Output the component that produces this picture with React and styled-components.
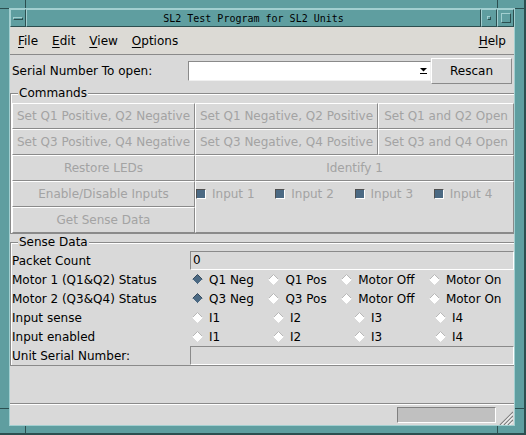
import React from 'react';
import styled, { createGlobalStyle } from 'styled-components';

const TEAL = '#5f9ea0';
const TEAL_LIGHT = '#a2cfd0';
const TEAL_DARK = '#2c4f50';
const BG = '#d9d9d9';
const SHADOW = '#8a8a8a';

const GlobalStyle = createGlobalStyle`
  html, body {
    margin: 0;
    padding: 0;
    background: ${TEAL};
  }
  body {
    font-family: "DejaVu Sans", "Liberation Sans", sans-serif;
    font-size: 12px;
    color: #000;
  }
`;

const Frame = styled.div`
  position: relative;
  width: 526px;
  height: 435px;
  box-sizing: border-box;
  padding: 8px 9px 7px 9px;
  background: ${TEAL};
  border-right: 2px solid ${TEAL_DARK};
  border-bottom: 2px solid ${TEAL_DARK};
`;

// resize handle marks of the window manager frame
const Mark = styled.span`
  position: absolute;
  left: ${p => p.$x}px;
  top: ${p => p.$y}px;
  width: ${p => p.$w}px;
  height: ${p => p.$h}px;
  background: ${TEAL_DARK};
`;

const Window = styled.div`
  height: 100%;
  box-sizing: border-box;
  border: 1px solid ${TEAL_LIGHT};
  display: flex;
  flex-direction: column;
`;

const TitleBar = styled.div`
  display: flex;
  height: 18px;
  flex: none;
`;

const TitlePart = styled.div`
  box-sizing: border-box;
  height: 100%;
  width: ${p => (p.$w ? `${p.$w}px` : 'auto')};
  flex: ${p => (p.$w ? 'none' : '1')};
  border-style: solid;
  border-width: 1px;
  border-color: ${TEAL_LIGHT} ${TEAL_DARK} ${TEAL_DARK} ${TEAL_LIGHT};
  display: flex;
  align-items: center;
  justify-content: center;
`;

const TitleText = styled.span`
  font-family: "DejaVu Sans Mono", "Liberation Mono", monospace;
  font-size: 10px;
  color: #000;
  white-space: nowrap;
`;

const Glyph = styled.span`
  display: block;
  box-sizing: border-box;
  width: ${p => p.$w}px;
  height: ${p => p.$h}px;
  border-style: solid;
  border-width: 1px;
  border-color: ${TEAL_LIGHT} ${TEAL_DARK} ${TEAL_DARK} ${TEAL_LIGHT};
`;

const Client = styled.div`
  flex: 1;
  display: flex;
  flex-direction: column;
  background: ${BG};
  min-height: 0;
`;

const MenuBar = styled.div`
  display: flex;
  align-items: center;
  gap: 14px;
  height: 27px;
  flex: none;
  padding: 0 8px;
  background: #dcdad5;
  border-bottom: 1px solid ${SHADOW};
`;

const MenuItem = styled.span`
  margin-left: ${p => (p.$right ? 'auto' : '0')};
  white-space: nowrap;
  u {
    text-underline-offset: 2px;
  }
`;

const SerialRow = styled.div`
  display: flex;
  align-items: center;
  height: 31px;
  flex: none;
  padding: 0 2px;
`;

const FieldLabel = styled.span`
  width: ${p => p.$w}px;
  flex: none;
  white-space: nowrap;
`;

const Combo = styled.div`
  flex: 1;
  height: 20px;
  box-sizing: border-box;
  background: #fff;
  border: 1px solid;
  border-color: ${SHADOW} #f0f0f0 #f0f0f0 ${SHADOW};
  display: flex;
  align-items: center;
  justify-content: flex-end;
  padding-right: 3px;
`;

const PushButton = styled.button`
  box-sizing: border-box;
  width: ${p => (p.$w ? `${p.$w}px` : 'auto')};
  height: ${p => (p.$h ? `${p.$h}px` : 'auto')};
  grid-column: ${p => (p.$span ? `span ${p.$span}` : 'auto')};
  margin: 0;
  padding: 0;
  border: 1px solid;
  border-color: #fff ${SHADOW} ${SHADOW} #fff;
  border-radius: 0;
  background: ${BG};
  color: ${p => (p.disabled ? '#a3a3a3' : '#000')};
  font-family: "DejaVu Sans", "Liberation Sans", sans-serif;
  font-size: 12px;
  white-space: nowrap;
  overflow: hidden;
`;

const Group = styled.fieldset`
  margin: ${p => p.$mt || 0}px 0 0 0;
  padding: ${p => p.$pt}px 0 0 1px;
  min-width: 0;
  flex: none;
  border: 1px solid ${SHADOW};
  border-right: none;
  box-shadow: inset 1px 1px 0 #fff;
`;

const GroupLabel = styled.legend`
  margin-left: 6px;
  padding: 0 1px;
  line-height: 14px;
  font-size: 12px;
  background: ${BG};
`;

const CommandGrid = styled.div`
  display: grid;
  grid-template-columns: 183px 183px 136px;
  grid-auto-rows: 26px;
`;

const InputPanel = styled.div`
  grid-column: span 2;
  grid-row: span 2;
  box-sizing: border-box;
  border: 1px solid;
  border-color: #fff ${SHADOW} ${SHADOW} #fff;
`;

const OptionRow = styled.div`
  display: flex;
  align-items: center;
  height: ${p => p.$h}px;
`;

const Option = styled.label`
  flex: 1 1 auto;
  display: flex;
  align-items: center;
  gap: ${p => p.$gap}px;
  padding-left: ${p => p.$pad}px;
  white-space: nowrap;
  color: ${p => (p.$dim ? '#a3a3a3' : '#000')};
`;

const CheckMark = styled.span`
  display: block;
  box-sizing: border-box;
  width: 10px;
  height: 10px;
  background: #4b6983;
  border: 1px solid;
  border-color: #505050 #fff #fff #505050;
`;

const SenseRow = styled.div`
  display: flex;
  align-items: center;
  height: 19px;
`;

const ValueBox = styled.div`
  flex: 1;
  height: 19px;
  box-sizing: border-box;
  border: 1px solid;
  border-color: ${SHADOW} #fff #fff ${SHADOW};
  padding-left: 2px;
  line-height: 17px;
`;

const ValueOptions = styled.div`
  flex: 1;
  display: flex;
  align-items: center;
  height: 100%;
`;

const Spacer = styled.div`
  flex: 1;
`;

const StatusBar = styled.div`
  display: flex;
  justify-content: flex-end;
  align-items: flex-start;
  gap: 3px;
  height: 22px;
  flex: none;
  box-sizing: border-box;
  padding: 3px 1px 0 0;
  border-top: 1px solid ${SHADOW};
  box-shadow: inset 0 1px 0 #fff;
`;

const StatusCell = styled.div`
  width: 99px;
  height: 16px;
  box-sizing: border-box;
  background: #c0c0c0;
  border: 1px solid;
  border-color: #808080 #fff #fff #808080;
`;

const GripBox = styled.div`
  margin-top: 4px;
  width: 14px;
  height: 14px;
`;

const Diamond = ({ on }) => (
  <svg width="11" height="11" viewBox="0 0 11 11">
    <polygon points="5.5,0.5 10.5,5.5 5.5,10.5 0.5,5.5" fill={on ? '#4b6983' : '#fff'} />
    <polyline points="0.5,5.5 5.5,0.5 10.5,5.5" fill="none" stroke={on ? '#34495c' : '#b8b8b8'} strokeWidth="1" />
    <polyline points="0.5,5.5 5.5,10.5 10.5,5.5" fill="none" stroke={on ? '#d9d9d9' : '#fff'} strokeWidth="1" />
  </svg>
);

const ComboArrow = () => (
  <svg width="7" height="6" viewBox="0 0 7 6">
    <polygon points="0,0 7,0 3.5,3.5" fill="#000" />
    <rect x="0" y="5" width="7" height="1" fill="#000" />
  </svg>
);

const Grip = () => (
  <GripBox>
    <svg width="14" height="14" viewBox="0 0 14 14">
      {[1, 5, 9].map(s => (
        <g key={s}>
          <line x1={s} y1="14" x2="14" y2={s} stroke="#808080" strokeWidth="1.2" />
          <line x1={s + 1.5} y1="14" x2="14" y2={s + 1.5} stroke="#fff" strokeWidth="1" />
        </g>
      ))}
    </svg>
  </GripBox>
);

const RadioGroup = ({ items, selected }) => (
  <ValueOptions>
    {items.map(item => (
      <Option key={item} $gap={6} $pad={2}>
        <Diamond on={item === selected} />
        {item}
      </Option>
    ))}
  </ValueOptions>
);

const marks = [
  { x: 25, y: 0, w: 1, h: 8 },
  { x: 497, y: 0, w: 1, h: 8 },
  { x: 0, y: 8, w: 9, h: 1 },
  { x: 515, y: 8, w: 9, h: 1 },
  { x: 0, y: 408, w: 9, h: 1 },
  { x: 515, y: 408, w: 9, h: 1 },
  { x: 25, y: 426, w: 1, h: 7 },
  { x: 497, y: 426, w: 1, h: 7 },
];

const commands = [
  'Set Q1 Positive, Q2 Negative',
  'Set Q1 Negative, Q2 Positive',
  'Set Q1 and Q2 Open',
  'Set Q3 Positive, Q4 Negative',
  'Set Q3 Negative, Q4 Positive',
  'Set Q3 and Q4 Open',
];

const inputs = ['I1', 'I2', 'I3', 'I4'];

const App = () => (
  <>
    <GlobalStyle />
    <Frame>
      {marks.map((m, i) => (
        <Mark key={i} $x={m.x} $y={m.y} $w={m.w} $h={m.h} />
      ))}
      <Window>
        <TitleBar>
          <TitlePart $w={16}>
            <Glyph $w={10} $h={3} />
          </TitlePart>
          <TitlePart>
            <TitleText>SL2 Test Program for SL2 Units</TitleText>
          </TitlePart>
          <TitlePart $w={16}>
            <Glyph $w={4} $h={4} />
          </TitlePart>
          <TitlePart $w={17}>
            <Glyph $w={10} $h={10} />
          </TitlePart>
        </TitleBar>
        <Client>
          <MenuBar>
            <MenuItem><u>F</u>ile</MenuItem>
            <MenuItem><u>E</u>dit</MenuItem>
            <MenuItem><u>V</u>iew</MenuItem>
            <MenuItem><u>O</u>ptions</MenuItem>
            <MenuItem $right><u>H</u>elp</MenuItem>
          </MenuBar>

          <SerialRow>
            <FieldLabel $w={176}>Serial Number To open:</FieldLabel>
            <Combo>
              <ComboArrow />
            </Combo>
            <PushButton $w={81} $h={26}>Rescan</PushButton>
          </SerialRow>

          <Group $pt={3}>
            <GroupLabel>Commands</GroupLabel>
            <CommandGrid>
              {commands.map(c => (
                <PushButton key={c} disabled>{c}</PushButton>
              ))}
              <PushButton disabled>Restore LEDs</PushButton>
              <PushButton disabled $span={2}>Identify 1</PushButton>
              <PushButton disabled>Enable/Disable Inputs</PushButton>
              <InputPanel>
                <OptionRow $h={24}>
                  {[1, 2, 3, 4].map(n => (
                    <Option key={n} $gap={6} $pad={0} $dim>
                      <CheckMark />
                      Input {n}
                    </Option>
                  ))}
                </OptionRow>
              </InputPanel>
              <PushButton disabled>Get Sense Data</PushButton>
            </CommandGrid>
          </Group>

          <Group $pt={2} $mt={1}>
            <GroupLabel>Sense Data</GroupLabel>
            <SenseRow>
              <FieldLabel $w={178}>Packet Count</FieldLabel>
              <ValueBox>0</ValueBox>
            </SenseRow>
            <SenseRow>
              <FieldLabel $w={178}>Motor 1 (Q1&amp;Q2) Status</FieldLabel>
              <RadioGroup items={['Q1 Neg', 'Q1 Pos', 'Motor Off', 'Motor On']} selected="Q1 Neg" />
            </SenseRow>
            <SenseRow>
              <FieldLabel $w={178}>Motor 2 (Q3&amp;Q4) Status</FieldLabel>
              <RadioGroup items={['Q3 Neg', 'Q3 Pos', 'Motor Off', 'Motor On']} selected="Q3 Neg" />
            </SenseRow>
            <SenseRow>
              <FieldLabel $w={178}>Input sense</FieldLabel>
              <RadioGroup items={inputs} />
            </SenseRow>
            <SenseRow>
              <FieldLabel $w={178}>Input enabled</FieldLabel>
              <RadioGroup items={inputs} />
            </SenseRow>
            <SenseRow>
              <FieldLabel $w={178}>Unit Serial Number:</FieldLabel>
              <ValueBox />
            </SenseRow>
          </Group>

          <Spacer />

          <StatusBar>
            <StatusCell />
            <Grip />
          </StatusBar>
        </Client>
      </Window>
    </Frame>
  </>
);

export default App;
